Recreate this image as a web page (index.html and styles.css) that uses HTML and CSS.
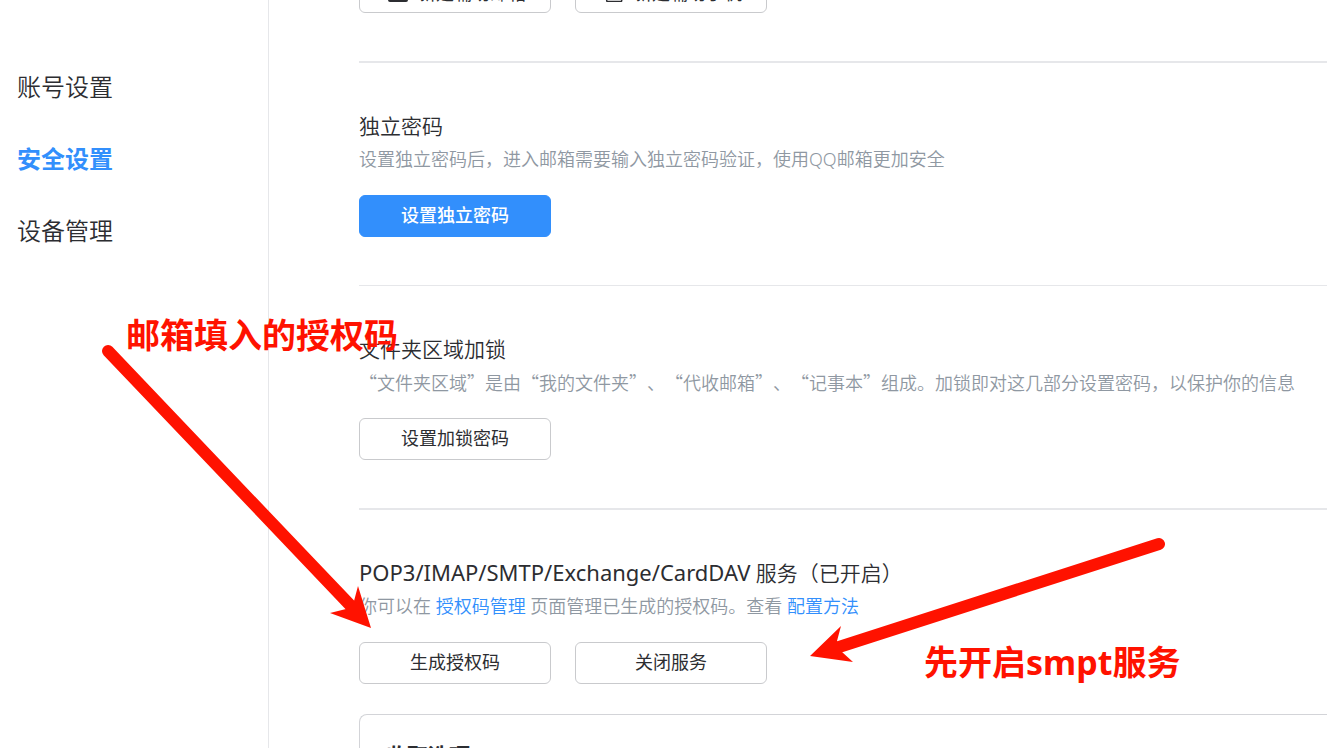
FILE: index.html
```html
<!DOCTYPE html>
<html lang="zh-CN">
<head>
<meta charset="utf-8">
<title>安全设置</title>
<link rel="stylesheet" href="styles.css">
</head>
<body>
<div class="page">
  <nav class="sidebar">
    <a class="nav-item" href="#account">账号设置</a>
    <a class="nav-item nav-item-active" href="#security">安全设置</a>
    <a class="nav-item" href="#devices">设备管理</a>
  </nav>
  <main class="content">
    <div class="scrolled-row">
      <button class="btn btn-icon" type="button">
        <svg class="icon" viewBox="0 0 20 20" aria-hidden="true"><rect x="1" y="3" width="18" height="16" rx="1"/><path d="M1 5l9 6 9-6"/></svg>
        新建辅助邮箱
      </button>
      <button class="btn btn-icon" type="button">
        <svg class="icon icon-thin" viewBox="0 0 20 20" aria-hidden="true"><rect x="2.7" y="1" width="15" height="18.5" rx="1"/><path d="M8 4h4"/></svg>
        新建辅助手机
      </button>
    </div>
    <section class="section section-strong">
      <h2 class="title">独立密码</h2>
      <p class="desc">设置独立密码后，进入邮箱需要输入独立密码验证，使用QQ邮箱更加安全</p>
      <div class="actions"><button class="btn btn-primary" type="button">设置独立密码</button></div>
    </section>
    <section class="section">
      <h2 class="title">文件夹区域加锁</h2>
      <p class="desc desc-quoted">“文件夹区域”是由“我的文件夹”、“代收邮箱”、“记事本”组成。加锁即对这几部分设置密码，以保护你的信息</p>
      <div class="actions"><button class="btn" type="button">设置加锁密码</button></div>
    </section>
    <section class="section section-strong">
      <h2 class="title"><span class="protocols">POP3/IMAP/SMTP/Exchange/CardDAV</span> 服务（已开启）</h2>
      <p class="desc">你可以在 <a class="link" href="#codes">授权码管理</a> 页面管理已生成的授权码。查看 <a class="link" href="#help">配置方法</a></p>
      <div class="actions">
        <button class="btn" type="button">生成授权码</button>
        <button class="btn" type="button">关闭服务</button>
      </div>
      <div class="card"><h3 class="card-title">收取选项</h3></div>
    </section>
  </main>
  <svg class="arrows" aria-hidden="true">
    <path class="shaft" d="M108 351L350 605M1159 544L839 647"/>
    <path d="M371 628L358 586L354 601L346 609L330 613ZM810 656L841 626L837 641L842 652L853 662Z"/>
  </svg>
  <p class="note note-code">邮箱填入的授权码</p>
  <p class="note note-service">先开启smpt服务</p>
</div>
</body>
</html>
```
FILE: styles.css
```css
* { box-sizing: border-box; }
body {
  margin: 0;
  background: #fff;
  color: #2c2d31;
  font-family: "Noto Sans", "Noto Sans CJK SC", sans-serif;
  font-weight: 350;
  text-spacing-trim: space-all;
}
h2, h3, p { margin: 0; }
.page {
  position: relative;
  display: flex;
  height: 100vh;
  overflow: hidden;
}
.sidebar {
  display: flex;
  flex-direction: column;
  gap: 36px;
  flex: 0 0 269px;
  padding: 69px 17px;
  border-right: 1px solid #e6e7ea;
}
.nav-item {
  color: inherit;
  font-size: 24px;
  line-height: 36px;
  text-decoration: none;
}
.nav-item-active { color: #328ffc; font-weight: 700; }
.content { flex: 1; min-width: 0; padding-left: 90px; }
.scrolled-row {
  display: flex;
  align-items: flex-end;
  gap: 24px;
  height: 13px;
  margin-bottom: 48px;
  overflow: hidden;
}
.section { padding: 48px 0; border-top: 1px solid #e6e7ea; }
.section-strong { border-top-width: 2px; }
.title { font-size: 21px; font-weight: 350; line-height: 30px; white-space: nowrap; }
.protocols { font-size: 22px; font-weight: 400; line-height: 22px; }
.desc {
  color: #8f98a2;
  font-size: 18px;
  line-height: 36px;
  white-space: nowrap;
}
.desc-quoted { font-family: "Noto Sans CJK SC", sans-serif; }
.link { color: #328ffc; text-decoration: none; }
.actions { display: flex; gap: 24px; margin-top: 18px; }
.btn {
  display: flex;
  align-items: center;
  justify-content: center;
  flex: none;
  width: 192px;
  height: 42px;
  padding: 0 0 4px;
  border: 1px solid #c9cacd;
  border-radius: 6px;
  background: #fff;
  color: inherit;
  font: 400 18px/26px "Noto Sans CJK SC", sans-serif;
}
.btn-icon { gap: 10px; padding: 0 0 0 4px; }
.btn-primary { border-color: #328ffc; background: #328ffc; color: #fff; font-weight: 500; }
.icon { width: 20px; height: 20px; fill: none; stroke: #2c2d31; stroke-width: 2; }
.icon-thin { stroke-width: 1.5; }
.card {
  height: 120px;
  margin-top: 30px;
  padding: 24px 26px;
  border: 1px solid #d3d4d8;
  border-right: 0;
  border-radius: 8px 0 0 8px;
}
.card-title { font-size: 21px; font-weight: 700; line-height: 32px; }
.arrows {
  position: absolute;
  top: 0;
  left: 0;
  width: 100%;
  height: 100%;
  fill: #ff1200;
  pointer-events: none;
}
.shaft { fill: none; stroke: #ff1200; stroke-width: 12; stroke-linecap: round; }
.note {
  position: absolute;
  color: #ff1200;
  font-size: 34px;
  font-weight: 700;
  line-height: 48px;
  white-space: nowrap;
}
.note-code { top: 311px; left: 126px; }
.note-service { top: 638px; left: 924px; }
```
